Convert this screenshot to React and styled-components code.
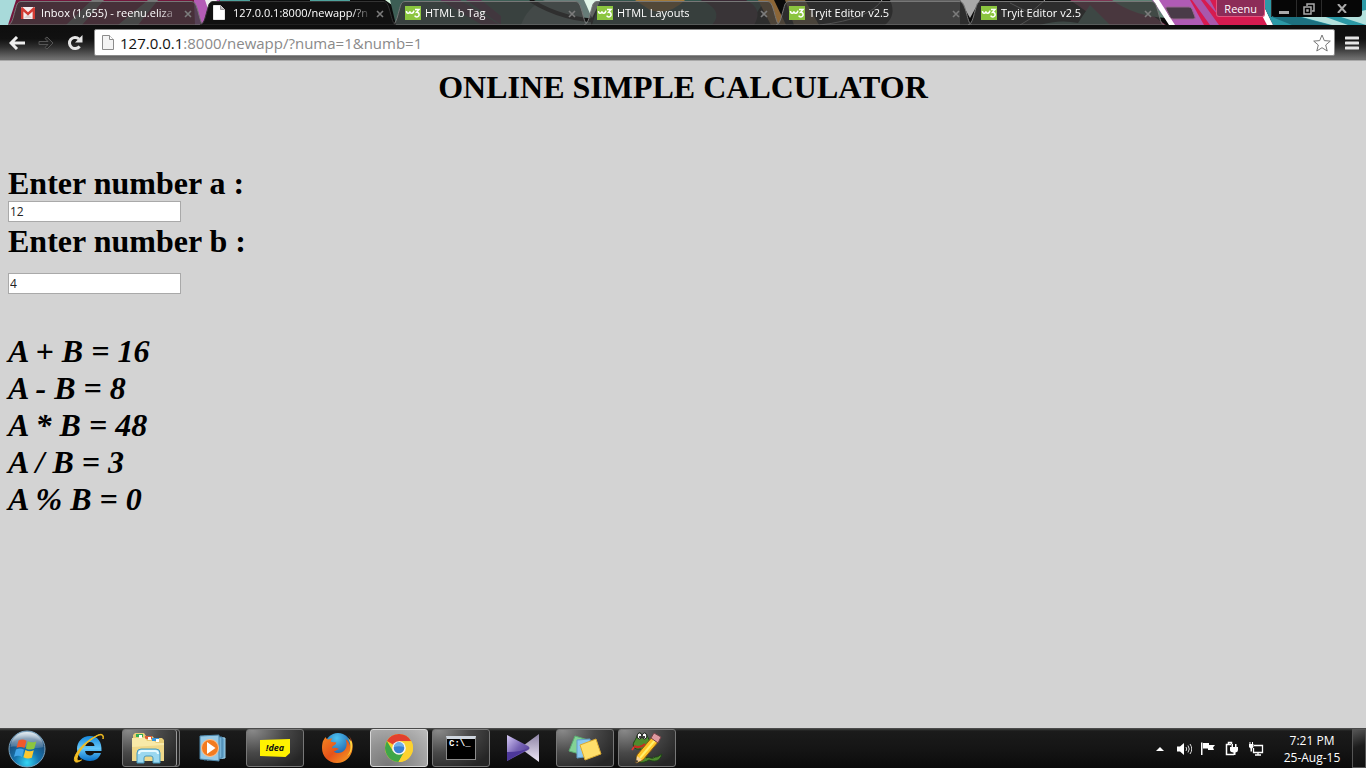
import React from "react";
import styled, { createGlobalStyle } from "styled-components";

const GlobalStyle = createGlobalStyle`
  *, *::before, *::after { box-sizing: border-box; }
  body { margin: 0; background: #d3d3d3; }
  button, input { font: inherit; color: inherit; margin: 0; }
  button { border: 0; padding: 0; background: none; cursor: pointer; }
  svg { display: block; flex: none; }
`;

const uiFont = `"Open Sans", "Noto Sans", sans-serif`;

const Screen = styled.div`
  min-height: 100vh;
  display: flex;
  flex-direction: column;
  background: #d3d3d3;
`;

/* ---------- tab strip ---------- */

const TabStrip = styled.header`
  position: relative;
  height: 25px;
  display: flex;
  justify-content: space-between;
  background: #111;
  overflow: hidden;
  font-family: ${uiFont};
`;

const ThemeArt = styled.svg`
  position: absolute;
  inset: 0;
  width: 100%;
  height: 100%;
`;

const Tabs = styled.nav`
  position: relative;
  display: flex;
  flex: 0 1 1202px;
  min-width: 0;
  padding-left: 7px;
`;

const Tab = styled.div`
  position: relative;
  flex: 0 1 198px;
  min-width: 0;
  height: 25px;
  margin-right: -6px;
  padding: 0 9px 0 14px;
  display: flex;
  align-items: center;
  z-index: ${(p) => (p.$active ? 2 : 1)};
`;

const TabShape = styled.svg`
  position: absolute;
  inset: 0;
  width: 100%;
  height: 100%;
`;

const TabButton = styled.button`
  position: relative;
  flex: 1;
  min-width: 0;
  display: flex;
  align-items: center;
  gap: 5px;
  color: #fff;
  font-size: 11px;
  line-height: 25px;
`;

const FaviconBox = styled.span`
  width: 15px;
  display: flex;
`;

const TabLabel = styled.span`
  flex: 1;
  text-align: left;
  white-space: nowrap;
  overflow: hidden;
  mask-image: linear-gradient(to right, #000 85%, transparent);
`;

const CloseButton = styled.button`
  position: relative;
  width: 16px;
  height: 16px;
  margin-top: 2px;
  display: grid;
  place-items: center;
`;

const NewTabButton = styled.button`
  flex: none;
  width: 32px;
  height: 14px;
  margin: 6px 0 0 6px;
`;

const StripEnd = styled.div`
  position: relative;
  display: flex;
  align-items: flex-start;
  gap: 6px;
  padding-right: 4px;
`;

const ProfileButton = styled.button`
  height: 17px;
  padding: 0 7px;
  border: 1px solid #e0557f;
  border-top: 0;
  border-radius: 0 0 3px 3px;
  background: #8c2c58;
  color: #fff;
  font-size: 11px;
  line-height: 18px;
`;

const WindowControls = styled.div`
  display: flex;
  height: 17px;
  background: #060606;
  border-radius: 0 0 4px 4px;
`;

const WindowButton = styled.button`
  width: ${(p) => (p.$wide ? 41 : 25)}px;
  display: grid;
  place-items: center;
  border-left: 1px solid #2c2c2c;
`;

/* ---------- toolbar ---------- */

const Toolbar = styled.div`
  height: 36px;
  padding: 0 6px 0 7px;
  display: flex;
  align-items: center;
  gap: 9px;
  background: linear-gradient(#0e0e0e 0, #111 14px, #2e2e2e 22px, #707070 34px);
  border-bottom: 1px solid #a9a9a9;
`;

const NavButton = styled.button`
  width: 20px;
  height: 20px;
  display: grid;
  place-items: center;
`;

const MenuButton = styled(NavButton)`
  width: 16px;
`;

const AddressBar = styled.form`
  flex: 1;
  min-width: 0;
  height: 27px;
  padding: 0 3px 0 7px;
  display: flex;
  align-items: center;
  gap: 6px;
  background: #fff;
  border: 1px solid #8b8b8b;
  border-radius: 2px;
  font-family: ${uiFont};
  font-size: 15px;
`;

const Address = styled.a`
  flex: 1;
  min-width: 0;
  overflow: hidden;
  white-space: nowrap;
  text-decoration: none;
  line-height: 22px;
  color: #8a8a8a;
`;

const Host = styled.span`
  color: #111;
`;

/* ---------- page ---------- */

const Page = styled.main`
  flex: 1;
  padding: 8px 8px 20px;
  color: #000;
  font-family: "Liberation Serif", "Times New Roman", serif;
  font-size: 32px;
  line-height: 37px;
  font-weight: bold;
`;

const Title = styled.h1`
  margin: 0 0 59px;
  font-size: inherit;
  text-align: center;
`;

const Field = styled.div`
  display: flex;
  flex-direction: column;
  align-items: flex-start;
  gap: ${(p) => p.$gap}px;
  margin-bottom: 1px;
`;

const FieldLabel = styled.label`
  line-height: 36px;
`;

const NumberInput = styled.input`
  width: 173px;
  height: 21px;
  padding: 0 1px;
  border: 1px solid #a9a9a9;
  background: #fff;
  color: #222;
  font-family: ${uiFont};
  font-size: 12px;
  font-weight: normal;
  line-height: 19px;
`;

const Results = styled.ul`
  list-style: none;
  margin: 39px 0 0;
  padding: 0;
  font-style: italic;
`;

/* ---------- taskbar ---------- */

const Taskbar = styled.footer`
  height: 40px;
  display: flex;
  align-items: stretch;
  background: linear-gradient(#3d3f3d 0, #1b1b1b 2px, #151515 50%, #0b0b0b 100%);
  border-top: 1px solid #4a4a4a;
  font-family: ${uiFont};
  color: #fff;
`;

const StartButton = styled.button`
  width: 54px;
  display: grid;
  place-items: center;
`;

const TaskList = styled.nav`
  flex: 1;
  display: flex;
  gap: 4px;
  padding-left: 6px;
`;

const slotLook = {
  idle: "border-color: transparent;",
  open: "border-color: #777; background: radial-gradient(ellipse at 10% 0, #8a8a8a 0, #484848 45%, #262626 85%);",
  front: "border-color: #d8d8d8; background: radial-gradient(ellipse at 30% 100%, #777 0, #929292 45%, #bcbcbc 100%);",
};

const TaskSlot = styled.button`
  width: 58px;
  height: 38px;
  display: grid;
  place-items: center;
  border: 1px solid;
  border-radius: 3px;
  ${(p) => slotLook[p.$look]}
  ${(p) => p.$stacked && "box-shadow: inset -2px 0 #262626, inset -3px 0 #999; padding-right: 6px;"}
`;

const Tray = styled.div`
  display: flex;
  align-items: center;
  gap: 8px;
`;

const TrayButton = styled.button`
  width: 16px;
  height: 16px;
  display: grid;
  place-items: center;
`;

const Clock = styled.time`
  width: 80px;
  font-size: 12px;
  line-height: 17px;
  text-align: center;
  white-space: nowrap;
`;

const ClockLine = styled.span`
  display: block;
`;

const ShowDesktop = styled.button`
  align-self: stretch;
  width: 14px;
  margin-left: -8px;
  border: 1px solid #555;
  background: linear-gradient(160deg, #555, #1c1c1c 45%, #101010);
`;

/* ---------- icons ---------- */

const GmailIcon = () => (
  <svg width="14" height="12" viewBox="0 0 14 12">
    <rect width="14" height="12" rx="1" fill="#f4eeee" />
    <path d="M3 11 7 7l4 4z" fill="#ddd0d0" />
    <path d="M0 1.5Q0 0 1.3 0L7 5.2 12.7 0Q14 0 14 1.5V12h-2.4V4.4L7 8.4 2.4 4.4V12H0z" fill="#d23b33" />
  </svg>
);

const PageIcon = ({ light }) => (
  <svg width="12" height="15" viewBox="0 0 12 15">
    <path d="M.5.5h7l4 4v10H.5z" fill={light ? "#fff" : "#f4f4f4"} stroke={light ? "#e8e8e8" : "#8c8c8c"} />
    <path d="M7.5.5v4h4" fill={light ? "#bbb" : "#fff"} stroke={light ? "#999" : "#8c8c8c"} />
  </svg>
);

const W3Icon = () => (
  <svg width="16" height="14" viewBox="0 0 16 14">
    <rect width="16" height="14" fill="#8bc53f" />
    <path d="M1.500 5c0 3 3 3 3.400.4.3 2.600 3.600 2.600 4-.7M10 3.500h4l-2.400 2.800c3.300-.3 3.300 4.600.3 4.600-1.200 0-1.900-.6-2.200-1.300" fill="none" stroke="#fff" strokeWidth="1.500" />
  </svg>
);

const favicons = { mail: <GmailIcon />, page: <PageIcon light />, w3: <W3Icon /> };

const CrossIcon = () => (
  <svg width="8" height="8" viewBox="0 0 8 8">
    <path d="m1 1 6 6M7 1 1 7" stroke="#7c7c7c" strokeWidth="1.600" />
  </svg>
);

const StartOrb = () => (
  <svg width="40" height="38" viewBox="0 0 40 38">
    <defs>
      <radialGradient id="orb" cx="50%" cy="88%" r="85%">
        <stop offset="0" stopColor="#34d6f4" />
        <stop offset=".4" stopColor="#1674ae" />
        <stop offset=".8" stopColor="#1b4b78" />
        <stop offset="1" stopColor="#8fb0c8" />
      </radialGradient>
      <linearGradient id="shine" x2="0" y2="1">
        <stop offset="0" stopColor="#fff" stopOpacity=".75" />
        <stop offset="1" stopColor="#fff" stopOpacity=".15" />
      </linearGradient>
    </defs>
    <circle cx="20" cy="19" r="18" fill="url(#orb)" stroke="#7ba3bf" />
    <path d="M3.500 17C4 8 11 2 20 2s16 6 16.500 15C27 20 13 15 3.500 17z" fill="url(#shine)" />
    <path d="M11.500 10.500c3-1.400 5.500-1.200 8 .3l-2 7.300c-2.500-1.500-5-1.600-8-.3z" fill="#f0592b" />
    <path d="M20.800 11.300c3 1.500 5.500 1.300 8.500.1l-2 7.400c-3 1.200-5.700 1-8.500-.4z" fill="#8cc63f" />
    <path d="M9 19.400c3-1.200 5.500-1.200 8 .3l-2 7.200c-2.500-1.500-5-1.500-8-.2z" fill="#42a5e8" />
    <path d="M18.400 20c2.800 1.500 5.500 1.500 8.400.3l-2 7.400c-3 1.100-5.600.9-8.400-.5z" fill="#fdc82f" />
  </svg>
);

const ExplorerEIcon = () => (
  <svg width="34" height="34" viewBox="0 0 34 34">
    <defs>
      <linearGradient id="ie" x2="0" y2="1">
        <stop offset="0" stopColor="#1688dc" />
        <stop offset=".5" stopColor="#66c8fa" />
        <stop offset="1" stopColor="#0870c8" />
      </linearGradient>
    </defs>
    <path fillRule="evenodd" d="M18 5C10 5 5 11 5 18s5 12 13 12c5.500 0 9.500-3 11-8h-7c-.8 1.600-2 2.400-4 2.400-3 0-4.700-1.800-4.900-4.400H29.500C30 11 26 5 18 5zm-4.800 10c.5-2.500 2-4 4.700-4s4.300 1.500 4.600 4z" fill="url(#ie)" />
    <path d="M31 8c1.500-5-2-6-7-3C14 10 4 20 2.500 27c-.8 4.500 2 5.500 7 2-3.500 1.500-5.200.3-4.200-3C7 19 17 9 25 5c4-2 6.500-1.500 6 3z" fill="#f3bd22" stroke="#f3bd22" />
  </svg>
);

const FoldersIcon = () => (
  <svg width="34" height="32" viewBox="0 0 34 32">
    <path d="M2 29V3l2-2h9l2 3h6l2 2h8l2 2v21z" fill="#e8ce78" />
    <rect x="5" y="2" width="7" height="3" fill="#33ad52" />
    <rect x="14" y="4" width="7" height="3" fill="#de5c35" />
    <rect x="21" y="6" width="7" height="3" fill="#3795dc" />
    <path d="M8 3h3v3H8zM17 5h3v3h-3zM25 7h3v3h-3z" fill="#fff" />
    <path d="M1 29V6h13l2 3h7l2 2h8v18z" fill="#f8e9a8" />
    <path d="M1 29V15l32-2v16z" fill="#efd889" />
    <path d="M6 31V21q0-4 4-4h15q4 0 4 4v10h-7v-5q0-2-2-2h-5q-2 0-2 2v5z" fill="#9bd8ef" stroke="#4599bd" />
    <path d="M8 22q0-3 3-3h13q3 0 3 3" fill="none" stroke="#e6faff" strokeWidth="2" />
  </svg>
);

const MediaIcon = () => (
  <svg width="28" height="28" viewBox="0 0 28 28">
    <path d="m8 2 18 2v20L8 26z" fill="#67a6cc" stroke="#a3d4ed" />
    <path d="m5 2 18 1v21L5 26z" fill="#78b4d8" stroke="#417da5" />
    <path d="m1 2 19-1v26L1 25z" fill="#98cae6" stroke="#4d88ad" />
    <circle cx="11" cy="14" r="8.500" fill="#f37b20" stroke="#ffc18c" />
    <path d="m8 8 8.500 6L8 20z" fill="#fff" />
  </svg>
);

const IdeaBadge = styled.span`
  width: 30px;
  height: 18px;
  background: #fff200;
  clip-path: polygon(0 6%, 100% 0, 100% 78%, 85% 100%, 0 94%);
  color: #111;
  font-size: 9px;
  font-weight: bold;
  font-style: italic;
  line-height: 17px;
  text-align: center;
`;

const FirefoxIcon = () => (
  <svg width="32" height="32" viewBox="0 0 32 32">
    <defs>
      <radialGradient id="globe" cx="45%" cy="20%" r="80%">
        <stop offset="0" stopColor="#4cc2f0" />
        <stop offset="1" stopColor="#174a9c" />
      </radialGradient>
      <linearGradient id="fox" x2="1" y2="1">
        <stop offset="0" stopColor="#f58a22" />
        <stop offset=".5" stopColor="#e65219" />
        <stop offset="1" stopColor="#f9a825" />
      </linearGradient>
    </defs>
    <circle cx="17" cy="14" r="13" fill="url(#globe)" />
    <path d="M2 9c1-1 1.500-3 2.500-4 .5 1.500 1.500 2.500 3 2.600 1-.7 2.300-1.300 4-1.200-1 1-1.800 2-1.800 3.400 2 .5 4 .4 5.600.7-.2 2-2 2.700-3.700 3.800-.5 1.200-.3 2.200-.3 2.200 1.700-1 4.400-.8 6.700.5-2 .2-2.800 2-5.300 2.500 3.300 2.700 8.500 1.600 11-1.500 2.500-3 2.500-7.500.6-11 3.500 2.500 4.500 5 4.800 7C31 8 29 5 26.500 3 31 6 32 12 31.500 17 30.500 25 24 31 16 31 7 31 1 24 1 16c0-3 .4-5 1-7z" fill="url(#fox)" />
    <path d="M27 6c4 7 3 14-1 18 5-3 6-9 5-14z" fill="#ffd23c" />
  </svg>
);

const ChromeIcon = () => (
  <svg width="30" height="30" viewBox="0 0 30 30">
    <circle cx="15" cy="15" r="14" fill="#fcd22f" />
    <path d="M15 15 2.900 8A14 14 0 0 1 27.200 8.200H15z" fill="#e2402e" />
    <path d="M2.900 8A14 14 0 0 0 14.500 29l6.200-11L15 15 9 18.300z" fill="#3fa648" />
    <path d="M15 8.200h12.200A14 14 0 0 1 14.500 29l6.300-10.500z" fill="#fcd22f" />
    <circle cx="15" cy="15" r="6.800" fill="#f7f7f7" />
    <circle cx="15" cy="15" r="5.300" fill="#397fd2" />
    <path d="M10 14a5 5 0 0 1 10 0c-3-1-7-1-10 0z" fill="#70aee8" />
  </svg>
);

const ConsoleFrame = styled.span`
  width: 30px;
  height: 24px;
  border: 1px solid #8b8b8b;
  border-top: 3px solid #cfd6df;
  background: #000;
  color: #fff;
  font-family: "Liberation Mono", monospace;
  font-size: 9px;
  font-weight: bold;
  line-height: 10px;
  text-align: left;
  padding-left: 2px;
`;

const KmIcon = () => (
  <svg width="32" height="28" viewBox="0 0 32 28">
    <defs>
      <linearGradient id="km" x2="1" y2="1">
        <stop offset="0" stopColor="#d5c9f5" />
        <stop offset=".5" stopColor="#7662b4" />
        <stop offset="1" stopColor="#46318a" />
      </linearGradient>
      <linearGradient id="kmBack" x2="0" y2="1">
        <stop offset="0" stopColor="#8d82a4" />
        <stop offset="1" stopColor="#efe9f8" />
      </linearGradient>
    </defs>
    <path d="M32 0v28L13 14z" fill="url(#kmBack)" />
    <path d="M0 1 21 12q3 2 0 4L0 27z" fill="url(#km)" />
    <path d="M0 18Q14 18 22 14L0 27z" fill="#4d389a" />
  </svg>
);

const NotesIcon = () => (
  <svg width="34" height="28" viewBox="0 0 34 28">
    <path d="m7 2 13 4-5 15L1 17z" fill="#83d296" stroke="#5cae73" />
    <path d="m9 6 13-1 1 17-14 2z" fill="#8bc7f0" stroke="#629ec8" />
    <path d="m12 11 16-6 5 15-16 6z" fill="#ffdf6b" stroke="#dbaa30" />
  </svg>
);

const SnakeIcon = () => (
  <svg width="34" height="34" viewBox="0 0 34 34">
    <path d="M9 31c-6-4-1-9 2-9 3-1 2-4-1-4-6 1-8-3-6-7 1-2 2-3 3-6 1-4 4-4 5-1 2-3 5-2 5 1 3 4 4 9 2 14-1 4-4 5-3 8 3-2 6 2 9-1 4 0 3-1 7-3-2 8-8 8-13 6-3 2-7 3-10 2z" fill="#4f8b2e" stroke="#1f4417" />
    <ellipse cx="9.500" cy="5" rx="2.300" ry="3" fill="#fff" stroke="#222" />
    <ellipse cx="14.500" cy="5" rx="2.300" ry="3" fill="#fff" stroke="#222" />
    <circle cx="10" cy="6" r="1" />
    <circle cx="14" cy="6" r="1" />
    <path d="M4 15q6 3 11-2" fill="none" stroke="#c72d22" strokeWidth="2" />
    <path d="m2 19 2-3" stroke="#e33" strokeWidth="1.500" />
    <path d="m6 32 1-8L23 5l6 5-16 19z" fill="#ffc629" stroke="#8f5a12" />
    <path d="m10 27 16-19" stroke="#fff06c" strokeWidth="2" />
    <path d="m21 7 3-5 7 4-3 6z" fill="#de9aa0" stroke="#724247" />
    <path d="m6 32 1-7 5 4z" fill="#f5d6a0" />
    <path d="m6 32 .4-3 2 1z" fill="#222" />
  </svg>
);

const TabOutline = ({ active }) => (
  <TabShape viewBox="0 0 198 25" preserveAspectRatio="none" aria-hidden="true">
    <path
      d="M1 25C5 24 6 18 8 11S10 2 14 1.500H184c4 0 5 3 7 10s3 13 6 13.500z"
      fill={active ? "#111" : "rgba(56,56,56,.76)"}
      stroke={active ? "#333" : "#777"}
    />
  </TabShape>
);

const StripArt = () => (
  <ThemeArt viewBox="0 0 1366 25" preserveAspectRatio="none" aria-hidden="true">
    <rect width="1366" height="25" fill="#0a0a0a" />
    <path d="M0 0h50L12 25H0z" fill="#a8dada" />
    <path d="M16 0h190v25H8z" fill="#74163c" />
    <path d="M66 25 92 0h12L82 25zM118 25 148 0h10l-20 25z" fill="#777" />
    <path d="M194 0h26l-15 25h-10z" fill="#b35cb5" />
    <path d="M205 0h12l-8 12z" fill="#eee" />
    <path d="M220 0h30v2h-30zM310 0h40v2h-40z" fill="#4fa39d" />
    <path d="M385 0h20l-3 12z" fill="#d5f4dd" />
    <path d="M390 0h200v25H396z" fill="#3d5e55" />
    <path d="M440 0h20l40 25h-18zM466 0h15l20 16v9z" fill="#5b3552" />
    <path d="M545 0c-14 5-20 15-24 25h70V0z" fill="#667c78" />
    <path d="M530 0q40 25 90 20" fill="none" stroke="#111" strokeWidth="4" />
    <path d="M584 0h17l-9 18z" fill="#e3f7ea" />
    <path d="M600 0h165l-16 25H592z" fill="#33564d" />
    <path d="M635 0h50q-16 16-35 10z" fill="#a37a38" />
    <path d="M700 0q25 10 12 25h42q10-16-8-25z" fill="#3a2935" />
    <path d="M758 0h16l12 25h-15z" fill="#8c6637" />
    <path d="M785 0h20l14 25h-25z" fill="#7d643f" />
    <path d="M820 25q50-6 62-25" fill="none" stroke="#999" />
    <path d="M890 0h70v25h-75q12-10 5-25z" fill="#606060" />
    <path d="M960 0h20l-10 18z" fill="#a8a8a8" />
    <path d="m1010 3 20 10 15-13M1020 25l18-11" fill="none" stroke="#999" />
    <path d="M1070 0h60l36 25h-60z" fill="#7d3552" />
    <path d="M1040 25q20-6 38-2l12-18 20 20z" fill="#4d776b" />
    <path d="M1112 0q22 16 54 18V0z" fill="#5e8073" />
    <path d="M1152 0h60l-5 25h-37z" fill="#b05bb5" />
    <path d="m1153 0 6 0 16 25h-6z" fill="#fff" />
    <path d="M1190 0h68l16 25h-70z" fill="#d61b50" />
    <path d="M1192 0h9l18 25h-9zM1205 0h5l8 15z" fill="#a957ac" />
    <path d="m1254 0 7 0 12 25h-6z" fill="#fff" />
    <path d="M1261 0h105v25h-93z" fill="#2c99a6" />
    <path d="M1298 16h25l25 9h-16zM1338 16l28-6v15z" fill="#b3e0dc" />
    <path d="m1272 17 20 8h38l-30-8z" fill="#1d7180" />
  </ThemeArt>
);

const tabs = [
  { icon: "mail", label: "Inbox (1,655) - reenu.eliza" },
  { icon: "page", label: "127.0.0.1:8000/newapp/?n", active: true },
  { icon: "w3", label: "HTML b Tag" },
  { icon: "w3", label: "HTML Layouts" },
  { icon: "w3", label: "Tryit Editor v2.5" },
  { icon: "w3", label: "Tryit Editor v2.5" },
];

const results = ["A + B = 16", "A - B = 8", "A * B = 48", "A / B = 3", "A % B = 0"];

const tasks = [
  { name: "Internet Explorer", look: "idle", icon: <ExplorerEIcon /> },
  { name: "Windows Explorer", look: "open", stacked: true, icon: <FoldersIcon /> },
  { name: "Media Player", look: "idle", icon: <MediaIcon /> },
  { name: "Idea", look: "open", icon: <IdeaBadge>!dea</IdeaBadge> },
  { name: "Firefox", look: "idle", icon: <FirefoxIcon /> },
  { name: "Chrome", look: "front", icon: <ChromeIcon /> },
  { name: "Command Prompt", look: "open", icon: <ConsoleFrame>C:\_</ConsoleFrame> },
  { name: "KMPlayer", look: "idle", icon: <KmIcon /> },
  { name: "Sticky Notes", look: "open", icon: <NotesIcon /> },
  { name: "Python editor", look: "open", icon: <SnakeIcon /> },
];

const trayIcons = [
  { name: "Show hidden icons", art: <path d="m4 10 4-4 4 4z" fill="#fff" /> },
  {
    name: "Volume",
    art: (
      <>
        <path d="M1 5.500h3L8 2v12l-4-3.500H1z" fill="#fff" />
        <path d="M10 6q1.500 2 0 4M12 4.500q2.500 3.500 0 7M14 3q3.500 5 0 10" fill="none" stroke="#ddd" />
      </>
    ),
  },
  {
    name: "Action Center",
    art: <path d="M1 1.500h1.500V14H1zM3 2h6v2h6l-2 2.500 1 2.500H8V7.500H3z" fill="#fff" />,
  },
  {
    name: "Power",
    art: (
      <>
        <path d="M7 3.500H2.500v10H10M4.500 3V1.500h3V3" fill="none" stroke="#fff" strokeWidth="1.500" />
        <path d="M6 6h8v3q0 2-2.500 2.500V14h-2v-2.500Q6 11 6 9zM7.500 3H9v3H7.500zM11 3h1.500v3H11z" fill="#fff" />
      </>
    ),
  },
  {
    name: "Network",
    art: (
      <>
        <path d="M6 4.500h8.500v7H5.500V7M7 14h6M10 11.500V14" fill="none" stroke="#fff" strokeWidth="1.300" />
        <path d="M1 3h4.500v3L4 7.500v3H2.500v-3L1 6zM1.500 1h1v2h-1zM4 1h1v2H4z" fill="#fff" />
      </>
    ),
  },
];

export default function App() {
  return (
    <Screen>
      <GlobalStyle />
      <TabStrip>
        <StripArt />
        <Tabs aria-label="Browser tabs">
          {tabs.map((tab, i) => (
            <Tab key={i} $active={tab.active}>
              <TabOutline active={tab.active} />
              <TabButton>
                <FaviconBox>{favicons[tab.icon]}</FaviconBox>
                <TabLabel>{tab.label}</TabLabel>
              </TabButton>
              <CloseButton aria-label="Close tab">
                <CrossIcon />
              </CloseButton>
            </Tab>
          ))}
          <NewTabButton aria-label="New tab">
            <svg width="32" height="14" viewBox="0 0 32 14">
              <path d="M2 1h22q2 0 3 2l3 8q1 2-2 2H8q-2 0-3-2L1 3Q0 1 2 1z" fill="#493b48" stroke="#98668f" />
            </svg>
          </NewTabButton>
        </Tabs>
        <StripEnd>
          <ProfileButton>Reenu</ProfileButton>
          <WindowControls>
            <WindowButton aria-label="Minimize">
              <svg width="12" height="12" viewBox="0 0 12 12">
                <path d="M1 8h10v3H1z" fill="#aaa" />
              </svg>
            </WindowButton>
            <WindowButton aria-label="Restore">
              <svg width="12" height="12" viewBox="0 0 12 12">
                <path d="M4 3V1h7v7H9M1 4h7v7H1zM4 7h1v1H4z" fill="none" stroke="#aaa" strokeWidth="1.500" />
              </svg>
            </WindowButton>
            <WindowButton $wide aria-label="Close">
              <svg width="10" height="9" viewBox="0 0 10 9">
                <path d="m1 0 8 9M9 0 1 9" stroke="#aaa" strokeWidth="2" />
              </svg>
            </WindowButton>
          </WindowControls>
        </StripEnd>
      </TabStrip>

      <Toolbar>
        <NavButton aria-label="Back">
          <svg width="16" height="14" viewBox="0 0 16 14">
            <path d="M8 1 2 7l6 6M2.500 7H16" fill="none" stroke="#eee" strokeWidth="3" />
          </svg>
        </NavButton>
        <NavButton aria-label="Forward">
          <svg width="16" height="14" viewBox="0 0 16 14">
            <path d="M1 5.500h9L7 2.500 9 1l6 6-6 6-2-1.500 3-3H1z" fill="#222" stroke="#555" />
          </svg>
        </NavButton>
        <NavButton aria-label="Reload">
          <svg width="16" height="16" viewBox="0 0 16 16">
            <path d="M12.600 11.300A5.600 5.600 0 1 1 12 4" fill="none" stroke="#e6e6e6" strokeWidth="3" />
            <path d="M15.500 0v7.500H8z" fill="#e6e6e6" />
          </svg>
        </NavButton>
        <AddressBar>
          <PageIcon />
          <Address href="#">
            <Host>127.0.0.1</Host>:8000/newapp/?numa=1&amp;numb=1
          </Address>
          <svg width="18" height="18" viewBox="0 0 18 18">
            <path d="m9 1 2.300 5.600 6 .5-4.600 3.900 1.500 6L9 13.700 3.800 17l1.500-6L.7 7.100l6-.5z" fill="#fff" stroke="#777" />
          </svg>
        </AddressBar>
        <MenuButton aria-label="Menu">
          <svg width="14" height="14" viewBox="0 0 14 14">
            <path d="M1 2h12M1 7h12M1 12h12" stroke="#e6e6e6" strokeWidth="3" strokeLinecap="round" />
          </svg>
        </MenuButton>
      </Toolbar>

      <Page>
        <Title>ONLINE SIMPLE CALCULATOR</Title>
        <Field $gap={0}>
          <FieldLabel htmlFor="numa">Enter number a :</FieldLabel>
          <NumberInput id="numa" name="numa" defaultValue="12" />
        </Field>
        <Field $gap={14}>
          <FieldLabel htmlFor="numb">Enter number b :</FieldLabel>
          <NumberInput id="numb" name="numb" defaultValue="4" />
        </Field>
        <Results>
          {results.map((line) => (
            <li key={line}>{line}</li>
          ))}
        </Results>
      </Page>

      <Taskbar>
        <StartButton aria-label="Start">
          <StartOrb />
        </StartButton>
        <TaskList aria-label="Running programs">
          {tasks.map((task) => (
            <TaskSlot key={task.name} $look={task.look} $stacked={task.stacked} aria-label={task.name}>
              {task.icon}
            </TaskSlot>
          ))}
        </TaskList>
        <Tray>
          {trayIcons.map((item) => (
            <TrayButton key={item.name} aria-label={item.name}>
              <svg width="16" height="16" viewBox="0 0 16 16">{item.art}</svg>
            </TrayButton>
          ))}
          <Clock>
            <ClockLine>7:21 PM</ClockLine>
            <ClockLine>25-Aug-15</ClockLine>
          </Clock>
          <ShowDesktop aria-label="Show desktop" />
        </Tray>
      </Taskbar>
    </Screen>
  );
}
